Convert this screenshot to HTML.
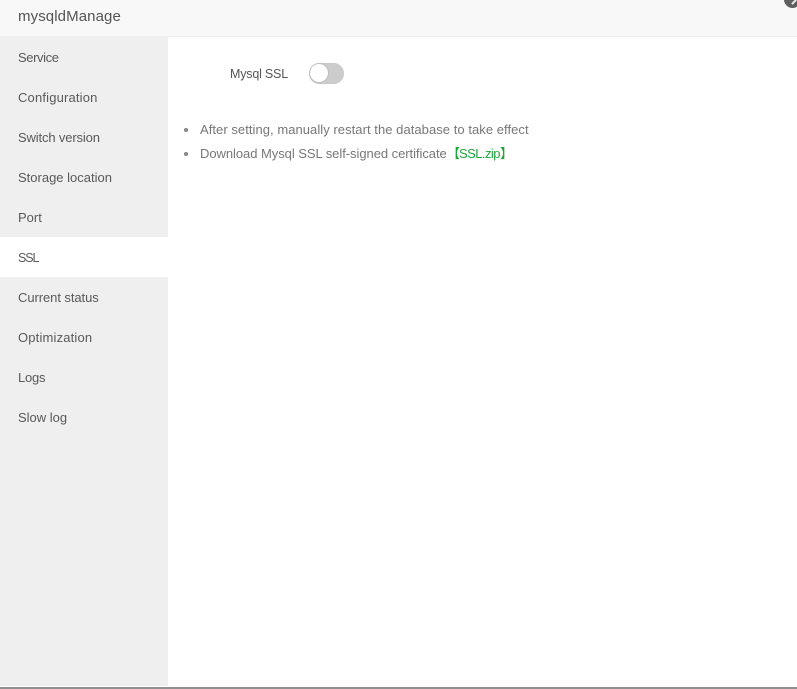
<!DOCTYPE html>
<html>
<head>
<meta charset="utf-8">
<style>
html,body{margin:0;padding:0;width:797px;height:689px;overflow:hidden;background:#fff}
body{position:relative;font-family:"Liberation Sans","Noto Sans CJK SC",sans-serif;color:#666}
.t{position:absolute;white-space:nowrap}
#head{position:absolute;left:0;top:0;width:797px;height:36px;background:#f8f8f8;border-bottom:1px solid #eee}
#title{left:18px;top:7px;font-size:15px;line-height:20px;color:#555;letter-spacing:.1px}
#side{position:absolute;left:0;top:37px;width:168px;height:649px;background:#efefef}
.i{position:absolute;left:0;width:168px;height:40px;line-height:42px;font-size:13px;color:#595959;text-indent:18px}
.on{background:#fff}
#bar{position:absolute;left:0;top:687px;width:797px;height:2px;background:#8f8f8f}
#sw{position:absolute;left:309px;top:62.5px;width:35px;height:21px;border-radius:11px;background:#ccc;box-shadow:inset 0 0 1px #bbb}
#knob{position:absolute;left:1px;top:1.5px;width:18px;height:18px;border-radius:50%;background:#fff;box-shadow:0 0 1.5px #999}
.dot{position:absolute;left:184px;width:4px;height:4px;border-radius:50%;background:#888}
#close{position:absolute;left:784px;top:-9px;width:17px;height:17px;border-radius:50%;background:#5f5f5f}
#close:after{content:"";position:absolute;left:7px;top:10px;width:6px;height:2px;background:#e8e8e8;transform:rotate(-45deg)}
.g{color:#20a53a;position:absolute;top:144px;font-size:13px;line-height:20px;white-space:nowrap}
</style>
</head>
<body>
<div id="head"></div>
<div id="title" class="t">mysqldManage</div>
<div id="close"></div>
<div id="side">
<div class="i" style="top:0;letter-spacing:-.4px">Service</div>
<div class="i" style="top:40px;letter-spacing:.17px">Configuration</div>
<div class="i" style="top:80px;letter-spacing:-.14px">Switch version</div>
<div class="i" style="top:120px">Storage location</div>
<div class="i" style="top:160px">Port</div>
<div class="i on" style="top:200px;letter-spacing:-1.1px;font-size:12.5px">SSL</div>
<div class="i" style="top:240px;letter-spacing:-.07px">Current status</div>
<div class="i" style="top:280px;letter-spacing:.17px">Optimization</div>
<div class="i" style="top:320px;letter-spacing:-.25px">Logs</div>
<div class="i" style="top:360px">Slow log</div>
</div>
<div class="t" style="left:230px;top:64px;font-size:12.5px;line-height:20px;color:#555;letter-spacing:-.2px">Mysql SSL</div>
<div id="sw"><div id="knob"></div></div>
<div class="dot" style="top:128px"></div>
<div class="t" style="left:200px;top:120px;font-size:13px;line-height:20px;color:#777;letter-spacing:.05px">After setting, manually restart the database to take effect</div>
<div class="dot" style="top:152px"></div>
<div class="t" style="left:200px;top:144px;font-size:13px;line-height:20px;color:#777;letter-spacing:-.05px">Download Mysql SSL self-signed certificate</div>
<div class="g" style="left:447px">【</div>
<div class="g" style="left:459px;letter-spacing:-.55px">SSL.zip</div>
<div class="g" style="left:500px">】</div>
<div id="bar"></div>
</body>
</html>
